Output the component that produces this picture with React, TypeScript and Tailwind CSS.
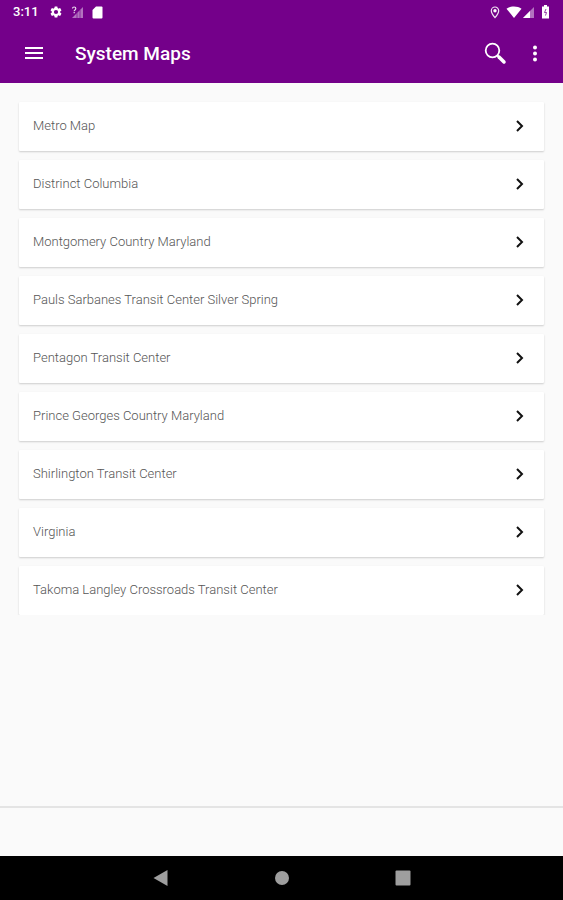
const maps = [
  "Metro Map",
  "Distrinct Columbia",
  "Montgomery Country Maryland",
  "Pauls Sarbanes Transit Center Silver Spring",
  "Pentagon Transit Center",
  "Prince Georges Country Maryland",
  "Shirlington Transit Center",
  "Virginia",
  "Takoma Langley Crossroads Transit Center",
];

function StatusBar() {
  return (
    <div className="flex h-6 items-center justify-between pl-[13px] pr-[13px]">
      <div className="flex items-center">
        <span className="w-[36px] text-[13px] font-medium leading-4">3:11</span>
        <svg className="h-[14px] w-[14px]" viewBox="0 0 24 24" fill="currentColor" aria-hidden="true">
          <path d="M19.14 12.94c.04-.3.06-.61.06-.94 0-.32-.02-.64-.07-.94l2.03-1.58a.49.49 0 0 0 .12-.61l-1.92-3.32a.49.49 0 0 0-.59-.22l-2.39.96a7 7 0 0 0-1.62-.94l-.36-2.54a.48.48 0 0 0-.48-.41h-3.84a.48.48 0 0 0-.47.41l-.36 2.54c-.59.24-1.13.57-1.62.94l-2.39-.96a.48.48 0 0 0-.59.22L2.74 8.87a.48.48 0 0 0 .12.61l2.03 1.58c-.05.3-.09.63-.09.94s.02.64.07.94l-2.03 1.58a.49.49 0 0 0-.12.61l1.92 3.32c.12.22.37.29.59.22l2.39-.96c.5.38 1.03.7 1.62.94l.36 2.54c.05.24.24.41.48.41h3.84c.24 0 .44-.17.47-.41l.36-2.54c.59-.24 1.13-.56 1.62-.94l2.39.96c.22.08.47 0 .59-.22l1.92-3.32a.48.48 0 0 0-.12-.61zM12 15.6a3.6 3.6 0 1 1 0-7.2 3.6 3.6 0 0 1 0 7.2z" />
        </svg>
        <svg className="ml-2 h-[13px] w-[13px]" viewBox="0 0 13 13" aria-hidden="true">
          <path d="M12 1v11H1z" fill="#fff" fillOpacity=".45" />
          <path d="M6 6.5V12M9 4v8" stroke="#74008a" strokeWidth=".6" />
          <path d="M1.500 2.500C1.500.5 4.800.5 4.800 2.500 4.800 4 3.200 3.800 3.200 5.200M3.200 6v1.200" fill="none" stroke="#fff" strokeOpacity=".85" strokeWidth="1.200" />
        </svg>
        <svg className="ml-2 h-[13px] w-[11px]" viewBox="0 0 11 13" fill="currentColor" aria-hidden="true">
          <path d="M4 .5h5.500a1 1 0 0 1 1 1v10a1 1 0 0 1-1 1h-8a1 1 0 0 1-1-1V4z" />
        </svg>
      </div>
      <div className="flex items-center">
        <svg className="h-[13px] w-[10px]" viewBox="0 0 10 13" aria-hidden="true">
          <path d="M5 1a3.700 3.700 0 0 0-3.700 3.700C1.300 7.300 5 11.600 5 11.600S8.700 7.300 8.700 4.700A3.700 3.700 0 0 0 5 1z" fill="none" stroke="#fff" strokeOpacity=".9" strokeWidth="1.200" />
          <circle cx="5" cy="4.700" r="1.700" fill="#fff" />
        </svg>
        <svg className="ml-[6px] h-3 w-4" viewBox="0 0 16 12" fill="currentColor" aria-hidden="true">
          <path d="M8 12 .5 2.700C4.500-.3 11.500-.3 15.500 2.700z" />
        </svg>
        <svg className="ml-px h-3 w-3" viewBox="0 0 12 12" fill="currentColor" aria-hidden="true">
          <path d="M11 1v11H0z" fillOpacity=".45" />
          <path d="M7 5v7H0z" />
        </svg>
        <svg className="ml-[6px] h-[14px] w-[9px]" viewBox="0 0 9 14" aria-hidden="true">
          <path d="M3 0h3v1.500h2v12H1v-12h2z" fill="#fff" />
          <path d="M5 4 3.500 7.500h2L4.500 10.500" fill="none" stroke="#74008a" strokeOpacity=".75" strokeWidth="1" />
        </svg>
      </div>
    </div>
  );
}

function Toolbar() {
  return (
    <div className="flex h-[59px] items-center pl-[22px] pr-4">
      <button type="button" aria-label="Open menu" className="flex h-10 w-6 items-center justify-center">
        <svg className="h-4 w-5" viewBox="0 0 20 16" stroke="currentColor" strokeWidth="2" aria-hidden="true">
          <path d="M1 2h18M1 7h18M1 12h18" />
        </svg>
      </button>
      <h1 className="ml-[29px] flex-1 text-[19px] font-medium leading-6">System Maps</h1>
      <button type="button" aria-label="Search" className="flex h-10 w-6 items-center justify-center">
        <svg className="h-6 w-6" viewBox="0 0 24 24" fill="none" stroke="currentColor" aria-hidden="true">
          <circle cx="9.500" cy="8.500" r="6.800" strokeWidth="1.800" />
          <path d="m14.200 13.200 2 2" strokeWidth="2" />
          <path d="m16 15 5 5" strokeWidth="3.500" strokeLinecap="round" />
        </svg>
      </button>
      <button type="button" aria-label="More options" className="ml-4 flex h-10 w-6 items-center justify-center">
        <svg className="h-[18px] w-1" viewBox="0 0 4 18" fill="currentColor" aria-hidden="true">
          <circle cx="2" cy="2.500" r="2" />
          <circle cx="2" cy="8.500" r="2" />
          <circle cx="2" cy="14.500" r="2" />
        </svg>
      </button>
    </div>
  );
}

export default function App() {
  return (
    <div className="flex min-h-screen flex-col bg-[#fafafa] font-['Roboto',sans-serif]">
      <header className="bg-[#74008a] text-white">
        <StatusBar />
        <Toolbar />
      </header>
      <main className="flex-1">
        <ul className="flex flex-col gap-[9px] overflow-hidden px-[19px] pt-[19px]">
          {maps.map((name) => (
            <li key={name}>
              <button
                type="button"
                className="flex h-[49px] w-full items-center justify-between rounded-[1px] bg-white pb-px pl-[14px] pr-[18px] text-left shadow-[0_1px_2px_rgba(0,0,0,0.18)]"
              >
                <span className="text-[13px] font-light leading-4 text-[#555]">{name}</span>
                <svg className="h-3 w-3" viewBox="0 0 12 12" fill="none" stroke="#111" strokeWidth="2" aria-hidden="true">
                  <path d="m3 1 5 5-5 5" />
                </svg>
              </button>
            </li>
          ))}
        </ul>
      </main>
      <footer>
        <div className="h-[50px] border-t-2 border-[#e4e4e4]" />
        <nav aria-label="System navigation" className="flex h-11 items-center justify-center gap-[97px] bg-black text-[#9e9e9e]">
          <button type="button" aria-label="Back" className="flex h-6 w-6 items-center justify-center">
            <svg className="h-4 w-4" viewBox="0 0 16 16" fill="currentColor" aria-hidden="true">
              <path d="M14.500 0v16L.5 8z" />
            </svg>
          </button>
          <button type="button" aria-label="Home" className="flex h-6 w-6 items-center justify-center">
            <svg className="h-4 w-4" viewBox="0 0 16 16" fill="currentColor" aria-hidden="true">
              <circle cx="8" cy="8" r="7" />
            </svg>
          </button>
          <button type="button" aria-label="Recent apps" className="flex h-6 w-6 items-center justify-center">
            <svg className="h-4 w-4" viewBox="0 0 16 16" fill="currentColor" aria-hidden="true">
              <rect x=".5" y=".5" width="15" height="15" rx="1" />
            </svg>
          </button>
        </nav>
      </footer>
    </div>
  );
}
